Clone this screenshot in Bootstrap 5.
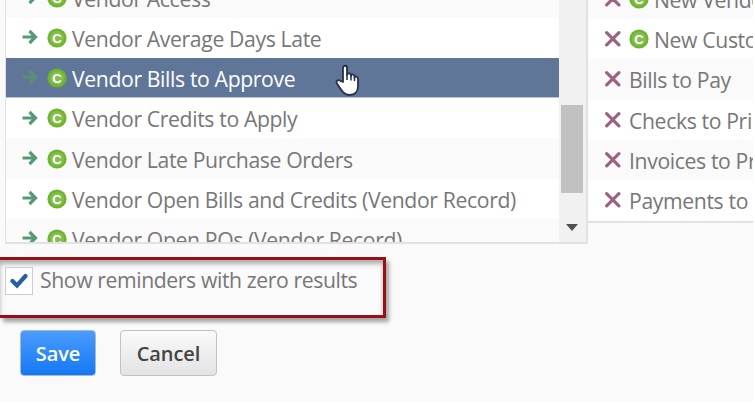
<!DOCTYPE html>
<html lang="en">
<head>
<meta charset="utf-8">
<meta name="viewport" content="width=device-width, initial-scale=1">
<title>Reminders</title>
<link href="https://cdn.jsdelivr.net/npm/bootstrap@5.3.0/dist/css/bootstrap.min.css" rel="stylesheet">
<style>
body{width:755px;height:403px;overflow:hidden;background:#fff;font-family:"Open Sans",sans-serif;color:#777}
.screen{width:753px;height:401px;background:#fafafa}
.screen svg{flex-shrink:0}
.lists{height:244px}
.source{width:583px;height:244px;margin-left:5px;border:solid #e2e2e2;border-width:0 2px 2px 1px}
.chosen{width:165px;height:223px;border-bottom:2px solid #e2e2e2}
.stack{margin-top:-22.3px}
.chosen .stack{margin-top:-21px}
.entry{height:40.2px;font-size:21.2px;letter-spacing:-.37px;line-height:40px;background:#fff;white-space:nowrap;padding-left:15px}
.entry span{padding-top:2px}
.chosen .entry{padding-left:16px}
.entry:nth-child(odd){background:#fafafa}
.entry.active-entry{background:#5f7699;color:#fff;border-bottom:1px solid #b7c3d8}
.active-entry .arrow{color:#588f74}
.arrow{width:17px;height:16px;color:#559a78;margin-right:9px;margin-top:-1px}
.badge-c{width:20px;height:20px;margin-right:5px}
.cross{width:17px;height:17px;margin-right:8px;margin-top:-1px;color:#9b6283}
.scroller{width:27px;background:#f1f1f1;padding:0 3px 0 2px}
.thumb{width:22px;height:88px;margin-top:105px;background:#c1c1c1}
.down{margin-top:31px}
.callout{width:386px;height:61px;margin-top:13px;border:3px solid #980f14;border-left:0;box-shadow:3px 4px 4px rgba(0,0,0,.35),inset 0 4px 4px rgba(0,0,0,.3);padding:7px 0 0 5px}
.tick{width:28px;height:28px;border:1.5px solid #ccc;background:#fff}
.tick-label{font-size:21.2px;letter-spacing:-.4px;line-height:28px;margin:-1px 0 0 7px;white-space:nowrap}
.actions{margin:12px 0 0 20px;gap:24px}
.actions .btn{height:46px;padding:0;font-size:20px;font-weight:600;border-radius:4px;line-height:41px;letter-spacing:-.1px}
.save{width:76px;color:#fff;background:linear-gradient(#4a9cff,#1578f3);border:1px solid #a9b9cd}
.cancel{width:97px;color:#444;background:linear-gradient(#fafafa,#e3e3e3);border:1.5px solid #c2c2c2}
.pointer{left:335px;top:64px;width:25px;height:33px}
</style>
</head>
<body>
<svg width="0" height="0" class="position-absolute">
<symbol id="arrow" viewBox="0 0 16 16"><path d="M1 8H14M8 2L14 8L8 14" fill="none" stroke="currentColor" stroke-width="3.200"/></symbol>
<symbol id="cross" viewBox="0 0 16 16"><path d="M2.500 2.500L14 14M14 2.500L2.500 14" fill="none" stroke="currentColor" stroke-width="3" stroke-linecap="round"/></symbol>
<symbol id="circle-c" viewBox="0 0 20 20"><circle cx="10" cy="10" r="9.6" fill="#6fb52c"/><circle cx="10" cy="10" r="7" fill="#85bd50"/><text x="10" y="14.700" text-anchor="middle" font-family="Liberation Sans,sans-serif" font-weight="700" font-size="13" letter-spacing="0" fill="#fff">C</text></symbol>
</svg>
<main class="screen position-relative overflow-hidden">
<div class="lists d-flex align-items-start">
<section class="source d-flex overflow-hidden">
<div class="stack flex-grow-1">
<div class="entry d-flex align-items-center"><svg class="arrow"><use href="#arrow"/></svg><svg class="badge-c"><use href="#circle-c"/></svg><span>Vendor Access</span></div>
<div class="entry d-flex align-items-center"><svg class="arrow"><use href="#arrow"/></svg><svg class="badge-c"><use href="#circle-c"/></svg><span>Vendor Average Days Late</span></div>
<div class="entry active-entry d-flex align-items-center"><svg class="arrow"><use href="#arrow"/></svg><svg class="badge-c"><use href="#circle-c"/></svg><span>Vendor Bills to Approve</span></div>
<div class="entry d-flex align-items-center"><svg class="arrow"><use href="#arrow"/></svg><svg class="badge-c"><use href="#circle-c"/></svg><span>Vendor Credits to Apply</span></div>
<div class="entry d-flex align-items-center"><svg class="arrow"><use href="#arrow"/></svg><svg class="badge-c"><use href="#circle-c"/></svg><span>Vendor Late Purchase Orders</span></div>
<div class="entry d-flex align-items-center"><svg class="arrow"><use href="#arrow"/></svg><svg class="badge-c"><use href="#circle-c"/></svg><span>Vendor Open Bills and Credits (Vendor Record)</span></div>
<div class="entry d-flex align-items-center"><svg class="arrow"><use href="#arrow"/></svg><svg class="badge-c"><use href="#circle-c"/></svg><span>Vendor Open POs (Vendor Record)</span></div>
</div>
<div class="scroller d-flex flex-column align-items-center flex-shrink-0"><div class="thumb flex-shrink-0"></div><svg class="down" width="12" height="7" viewBox="0 0 12 7"><path d="M0 0H12L6 7Z" fill="#505050"/></svg></div>
</section>
<section class="chosen overflow-hidden">
<div class="stack">
<div class="entry d-flex align-items-center"><svg class="cross"><use href="#cross"/></svg><svg class="badge-c"><use href="#circle-c"/></svg><span>New Vendors</span></div>
<div class="entry d-flex align-items-center"><svg class="cross"><use href="#cross"/></svg><svg class="badge-c"><use href="#circle-c"/></svg><span>New Customers</span></div>
<div class="entry d-flex align-items-center"><svg class="cross"><use href="#cross"/></svg><span>Bills to Pay</span></div>
<div class="entry d-flex align-items-center"><svg class="cross"><use href="#cross"/></svg><span>Checks to Print</span></div>
<div class="entry d-flex align-items-center"><svg class="cross"><use href="#cross"/></svg><span>Invoices to Print</span></div>
<div class="entry d-flex align-items-center"><svg class="cross"><use href="#cross"/></svg><span>Payments to Print</span></div>
</div>
</section>
</div>
<div class="callout d-flex align-items-start">
<div class="tick d-flex align-items-center justify-content-center flex-shrink-0"><svg width="18" height="16" viewBox="0 0 18 16"><path d="M2.500 8L7 12.500L15.500 3" fill="none" stroke="#285ea4" stroke-width="4.200" stroke-linecap="round"/></svg></div>
<span class="tick-label">Show reminders with zero results</span>
</div>
<div class="actions d-flex"><button class="btn save">Save</button><button class="btn cancel">Cancel</button></div>
<svg class="pointer position-absolute" viewBox="0 0 25 33"><path d="M8 18V4C8 1 12 1 12 4V11C12.500 8.500 16 9 16 11.500V12C16.500 9.500 19.500 10 19.500 12.500V13.500C20.500 11.500 23 12.500 23 15V22C23 28 20 31 14.500 31C9 31 7 27 2 19.500C0.500 17 3.500 15 5.500 17Z" fill="#fff" stroke="#26304a" stroke-width="1.800" stroke-linejoin="round"/><path d="M12 10V16M16 11.500V16.500M19.500 12.500V17" stroke="#26304a" stroke-width="1.500"/></svg>
</main>
<script src="https://cdn.jsdelivr.net/npm/bootstrap@5.3.0/dist/js/bootstrap.bundle.min.js"></script>
</body>
</html>
